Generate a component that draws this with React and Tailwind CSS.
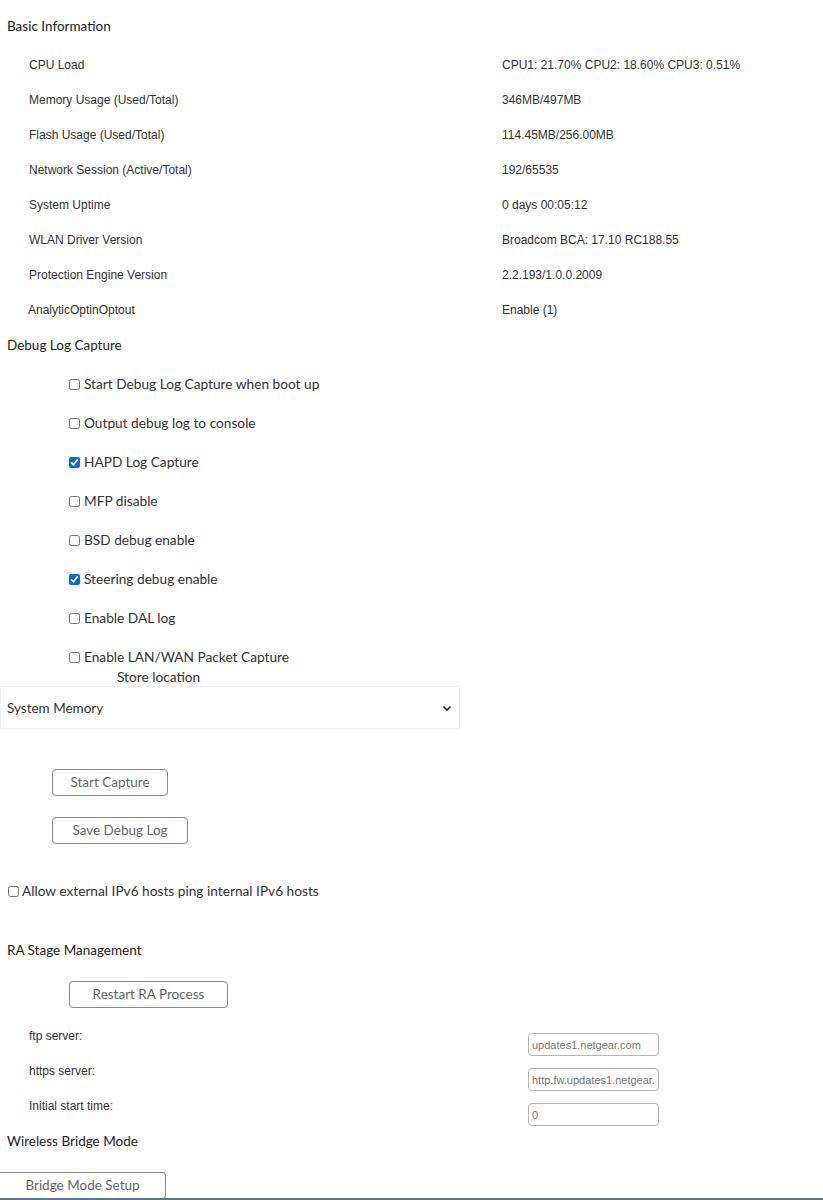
import { useState } from 'react';

const infoRows = [
  ['CPU Load', 'CPU1: 21.70% CPU2: 18.60% CPU3: 0.51%'],
  ['Memory Usage (Used/Total)', '346MB/497MB'],
  ['Flash Usage (Used/Total)', '114.45MB/256.00MB'],
  ['Network Session (Active/Total)', '192/65535'],
  ['System Uptime', '0 days 00:05:12'],
  ['WLAN Driver Version', 'Broadcom BCA: 17.10 RC188.55'],
  ['Protection Engine Version', '2.2.193/1.0.0.2009'],
];

const debugOptions = [
  { id: 'boot', label: 'Start Debug Log Capture when boot up', checked: false },
  { id: 'console', label: 'Output debug log to console', checked: false },
  { id: 'hapd', label: 'HAPD Log Capture', checked: true },
  { id: 'mfp', label: 'MFP disable', checked: false },
  { id: 'bsd', label: 'BSD debug enable', checked: false },
  { id: 'steering', label: 'Steering debug enable', checked: true },
  { id: 'dal', label: 'Enable DAL log', checked: false },
];

const raRows = [
  ['ftp server:', 'updates1.netgear.com'],
  ['https server:', 'http.fw.updates1.netgear.com'],
  ['Initial start time:', '0'],
];

const heading = "h-[35px] flex items-center pl-[7px] text-[13.5px] text-[#222] font-['Lato',sans-serif]";
const btn =
  "h-[27px] border border-[#8a8a8a] rounded-[4px] bg-white text-[13.5px] text-[#666] font-['Lato',sans-serif]";

const Check = ({ checked, onChange }) => (
  <input
    type="checkbox"
    checked={checked}
    onChange={onChange}
    className="w-[11px] h-[11px] m-0 mr-[4px] accent-[#0a6cd6] align-middle"
  />
);

export default function App() {
  const [opts, setOpts] = useState(
    Object.fromEntries(debugOptions.map((o) => [o.id, o.checked]))
  );
  const [lanWan, setLanWan] = useState(false);
  const [ipv6, setIpv6] = useState(false);

  const toggle = (id) => setOpts((prev) => ({ ...prev, [id]: !prev[id] }));

  return (
    <div className="w-[823px] h-[1200px] bg-white overflow-hidden relative font-['Lato',sans-serif]">
      {/* Basic Information */}
      <div className={`${heading} h-[47px] pt-[5px]`}>Basic Information</div>
      <div className="font-['Liberation_Sans',Arial,sans-serif] text-[12px] text-[#333]">
        {infoRows.map(([label, value]) => (
          <div key={label} className="h-[35px] flex items-center">
            <div className="w-[502px] pl-[29px]">{label}</div>
            <div>{value}</div>
          </div>
        ))}
        <div className="h-[35px] flex items-center">
          <div className="w-[502px] pl-[28px]">AnalyticOptinOptout</div>
          <div>Enable (1)</div>
        </div>
      </div>

      {/* Debug Log Capture */}
      <div className={`${heading} mt-[1px]`}>Debug Log Capture</div>
      <div className="mt-[2px] text-[13.7px] text-[#333]">
        {debugOptions.map((o) => (
          <label key={o.id} className="h-[39px] flex items-center pl-[69px]">
            <Check checked={opts[o.id]} onChange={() => toggle(o.id)} />
            <span>{o.label}</span>
          </label>
        ))}
        <div className="pt-[10px]">
          <label className="h-[18px] flex items-center pl-[69px]">
            <Check checked={lanWan} onChange={() => setLanWan(!lanWan)} />
            <span>Enable LAN/WAN Packet Capture</span>
          </label>
          <div className="h-[20px] flex items-center pl-[117px] pt-[2px]">Store location</div>
        </div>
      </div>

      {/* Store location select */}
      <div className="h-[43px] w-[460px] border border-[#f0f0f0] flex items-center justify-between pl-[6px] pr-[7px] text-[13.5px] text-[#333]">
        <span className="pt-[1px]">System Memory</span>
        <svg width="10" height="7" viewBox="0 0 10 7" className="mt-[2px]">
          <path d="M1.5 1.5 L5 5 L8.5 1.5" stroke="#222" strokeWidth="1.6" fill="none" />
        </svg>
      </div>

      <div className="pl-[52px] pt-[40px] flex flex-col items-start gap-[21px]">
        <button className={`${btn} w-[116px]`}>Start Capture</button>
        <button className={`${btn} w-[136px]`}>Save Debug Log</button>
      </div>

      <label className="mt-[38px] h-[18px] flex items-center pl-[8px] text-[13.7px] text-[#333]">
        <Check checked={ipv6} onChange={() => setIpv6(!ipv6)} />
        <span className="ml-[-1px]">Allow external IPv6 hosts ping internal IPv6 hosts</span>
      </label>

      {/* RA Stage Management */}
      <div className={`${heading} mt-[33px]`}>RA Stage Management</div>
      <div className="pl-[69px] pt-[13px]">
        <button className={`${btn} w-[159px]`}>Restart RA Process</button>
      </div>
      <div className="pt-[19px] font-['Liberation_Sans',Arial,sans-serif] text-[12px] text-[#333]">
        {raRows.map(([label, value]) => (
          <div key={label} className="h-[35px] flex items-start">
            <div className="w-[528px] pl-[29px] leading-[16px] pt-[1px]">{label}</div>
            <input
              readOnly
              value={value}
              className="w-[131px] h-[23px] mt-[6px] border border-[#b5b5b5] rounded-[4px] px-[3px] text-[11px] text-[#777] outline-none"
            />
          </div>
        ))}
      </div>

      {/* Wireless Bridge Mode */}
      <div className={`${heading} mt-[-8px]`}>Wireless Bridge Mode</div>
      <div className="pt-[13px]">
        <button className={`${btn} w-[166px] rounded-l-none border-l-0`}>Bridge Mode Setup</button>
      </div>
      <div className="absolute left-0 right-0 bottom-0 h-[2px] bg-[#5d7594]" />
    </div>
  );
}
